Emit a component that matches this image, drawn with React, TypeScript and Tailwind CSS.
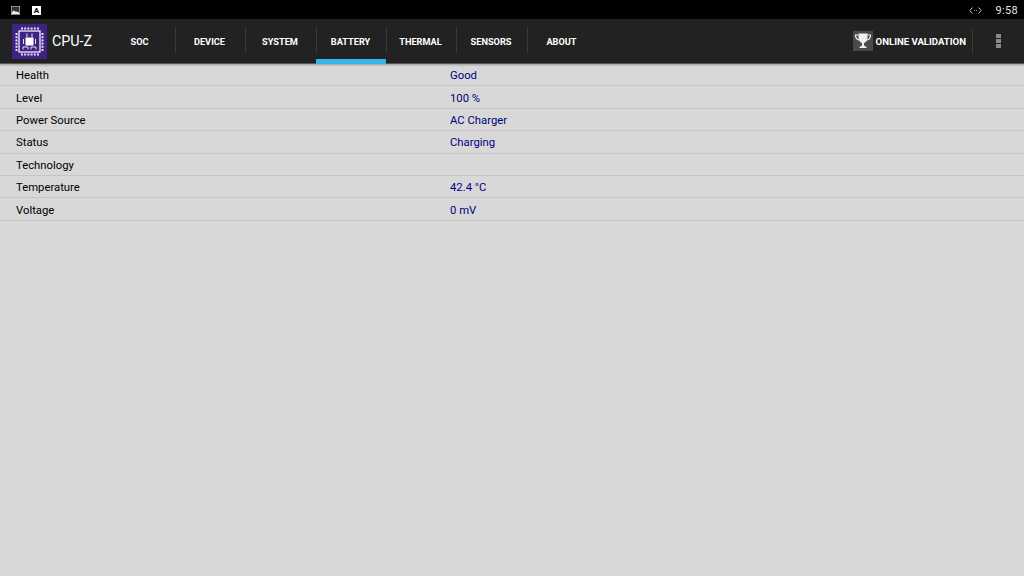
const tabs = [
  { label: 'SOC', width: 'w-[70px]' },
  { label: 'DEVICE', width: 'w-[70px]' },
  { label: 'SYSTEM', width: 'w-[71px]' },
  { label: 'BATTERY', width: 'w-[70px]', active: true },
  { label: 'THERMAL', width: 'w-[70px]' },
  { label: 'SENSORS', width: 'w-[71px]' },
  { label: 'ABOUT', width: 'w-[70px]' },
];

const rows = [
  { name: 'Health', value: 'Good' },
  { name: 'Level', value: '100 %' },
  { name: 'Power Source', value: 'AC Charger' },
  { name: 'Status', value: 'Charging' },
  { name: 'Technology', value: '' },
  { name: 'Temperature', value: '42.4 °C' },
  { name: 'Voltage', value: '0 mV' },
];

function CpuLogo() {
  const pins = [0, 1, 2, 3, 4, 5];
  return (
    <div className="w-[35px] h-[35px] bg-[#3f2384]">
      <svg width="35" height="35" viewBox="0 0 35 35" fill="none">
        <rect x="7" y="7" width="21" height="21" stroke="#fff" strokeWidth="1.2" />
        <rect x="13.5" y="13.5" width="8" height="8" fill="#fff" />
        <path d="M11.5 15V20M23.5 15V20M15 9.5V13M20 9.5V13M11 25.5V23H16V25.5M19 25.5V23H24V25.5" stroke="#e6def5" strokeWidth="1" />
        {pins.map((p) => (
          <g key={p} fill="#e6def5">
            <rect x={9 + p * 3.2} y="3.5" width="2" height="2" />
            <rect x={9 + p * 3.2} y="29.5" width="2" height="2" />
            <rect x="3.5" y={9 + p * 3.2} width="2" height="2" />
            <rect x="29.5" y={9 + p * 3.2} width="2" height="2" />
          </g>
        ))}
      </svg>
    </div>
  );
}

function Trophy() {
  return (
    <div className="w-[20px] h-[20px] bg-[#4a4a4a] flex items-center justify-center">
      <svg width="18" height="18" viewBox="0 0 18 18" fill="none">
        <path d="M4.5 1.5H13.5V6C13.5 9 11.5 10.5 10 11V13.5L12.5 15V16H5.5V15L8 13.5V11C6.5 10.5 4.5 9 4.5 6Z" fill="#eee" />
        <path d="M4.5 3H1.5C1.5 6 2.5 7.5 5 8M13.5 3H16.5C16.5 6 15.5 7.5 13 8" stroke="#eee" strokeWidth="1.2" />
      </svg>
    </div>
  );
}

export default function App() {
  return (
    <div className="w-[1024px] h-[576px] flex flex-col overflow-hidden bg-[#d8d8d8] font-['Roboto',sans-serif]">
      {/* status bar */}
      <div className="h-[19px] bg-black flex items-center pl-[11px] pr-[6px] pt-[1px] shrink-0">
        <svg width="9" height="9" viewBox="0 0 9 9">
          <rect width="9" height="9" fill="#333" stroke="#ddd" strokeWidth="1" />
          <path d="M1 8V6L3 4.5L5 6L6 5.5L8 6.5V8Z" fill="#eee" />
        </svg>
        <div className="ml-[12px] w-[9px] h-[9px] bg-white text-black text-[8px] leading-[9px] font-bold text-center">
          A
        </div>
        <svg className="ml-auto mr-[14px]" width="13" height="9" viewBox="0 0 13 9" fill="none">
          <path d="M3.5 1.5L0.8 4.5L3.5 7.5M9.5 1.5L12.2 4.5L9.5 7.5" stroke="#ddd" strokeWidth="0.9" />
          <path d="M5 4.5H5.8M7.2 4.5H8" stroke="#ddd" strokeWidth="0.9" />
        </svg>
        <div className="text-[#e6e6e6] text-[11px] tracking-[0.3px] pt-[2px]">9:58</div>
      </div>

      {/* action bar */}
      <div className="h-[45px] bg-[#222222] flex items-center pl-[12px] shrink-0 border-b border-[#555] shadow-[0_1px_2px_rgba(0,0,0,0.3)]">
        <CpuLogo />
        <div className="ml-[5px] w-[54px] text-white text-[14.3px] pt-[2px]">CPU-Z</div>
        <div className="flex h-full">
          {tabs.map((t, i) => (
            <div key={t.label} className={`${t.width} relative flex items-center justify-center pt-[2px] pr-[3px]`}>
              <span className="text-white text-[9.2px] font-bold">{t.label}</span>
              {i < tabs.length - 1 && (
                <div className="absolute right-0 top-[9px] h-[25px] w-px bg-[#3a3a3a]" />
              )}
              {t.active && <div className="absolute left-[-1px] right-[1px] bottom-[-1px] h-[5px] bg-[#33b5e5]" />}
            </div>
          ))}
        </div>
        <div className="ml-auto flex items-center h-full">
          <Trophy />
          <span className="ml-[3px] text-white text-[9.6px] font-bold pt-[2px]">ONLINE VALIDATION</span>
          <div className="ml-[6px] h-[25px] w-px bg-[#3a3a3a]" />
          <div className="w-[51px] flex flex-col items-center gap-[1px]">
            <div className="w-[5px] h-[4px] bg-[#8a8a8a]" />
            <div className="w-[5px] h-[4px] bg-[#8a8a8a]" />
            <div className="w-[5px] h-[4px] bg-[#8a8a8a]" />
          </div>
        </div>
      </div>

      {/* battery table */}
      <div className="flex flex-col">
        {rows.map((r) => (
          <div key={r.name} className="h-[22.4px] flex items-center border-b border-[#c6c6c6] text-[11.3px] pt-[4px]">
            <div className="w-[450px] pl-[16px] text-black">{r.name}</div>
            <div className="text-[#00007f]">{r.value}</div>
          </div>
        ))}
      </div>
    </div>
  );
}
